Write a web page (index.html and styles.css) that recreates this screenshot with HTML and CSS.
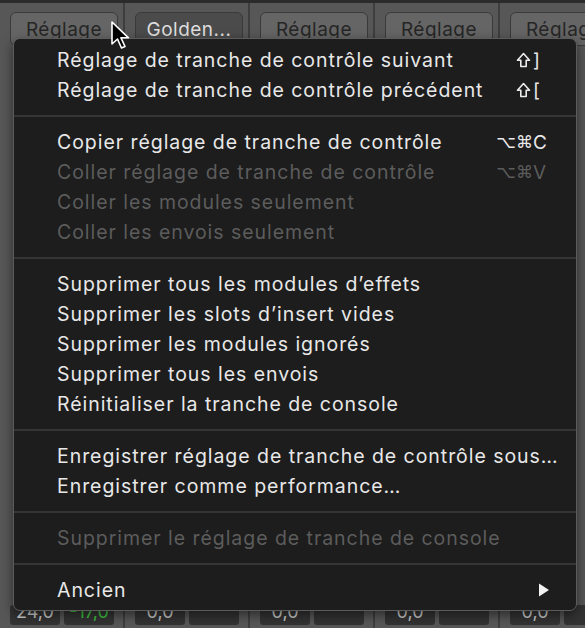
FILE: index.html
```html
<!DOCTYPE html>
<html lang="fr">
<head>
<meta charset="utf-8">
<link rel="stylesheet" href="styles.css">
</head>
<body>
<div class="mixer">
  <div class="strip">
    <div class="btn">Réglage</div>
    <div class="fields"><div class="field">24,0</div><div class="field green">-17,0</div></div>
  </div>
  <div class="strip">
    <div class="btn dark">Golden...</div>
    <div class="fields"><div class="field">0,0</div><div class="field"></div></div>
  </div>
  <div class="strip">
    <div class="btn">Réglage</div>
    <div class="fields"><div class="field">0,0</div><div class="field"></div></div>
  </div>
  <div class="strip">
    <div class="btn">Réglage</div>
    <div class="fields"><div class="field">0,0</div><div class="field"></div></div>
  </div>
  <div class="strip">
    <div class="btn">Réglage</div>
    <div class="fields"><div class="field">0,0</div><div class="field"></div></div>
  </div>
</div>

<div class="menu">
  <div class="item"><span class="label">Réglage de tranche de contrôle suivant</span><span class="sc"><svg class="shift" width="15" height="16" viewBox="0 0 15 16"><path d="M7.5 1.5 L13.5 8.2 L10.2 8.2 L10.2 14.5 L4.8 14.5 L4.8 8.2 L1.5 8.2 Z" fill="none" stroke="#ececec" stroke-width="1.6" stroke-linejoin="round"/></svg><span class="key">]</span></span></div>
  <div class="item"><span class="label">Réglage de tranche de contrôle précédent</span><span class="sc"><svg class="shift" width="15" height="16" viewBox="0 0 15 16"><path d="M7.5 1.5 L13.5 8.2 L10.2 8.2 L10.2 14.5 L4.8 14.5 L4.8 8.2 L1.5 8.2 Z" fill="none" stroke="#ececec" stroke-width="1.6" stroke-linejoin="round"/></svg><span class="key">[</span></span></div>
  <div class="sep"></div>
  <div class="item"><span class="label">Copier réglage de tranche de contrôle</span><span class="sc"><span class="mod">⌥⌘</span><span class="key">C</span></span></div>
  <div class="item off"><span class="label">Coller réglage de tranche de contrôle</span><span class="sc"><span class="mod">⌥⌘</span><span class="key">V</span></span></div>
  <div class="item off"><span class="label">Coller les modules seulement</span></div>
  <div class="item off"><span class="label">Coller les envois seulement</span></div>
  <div class="sep"></div>
  <div class="item"><span class="label">Supprimer tous les modules d’effets</span></div>
  <div class="item"><span class="label">Supprimer les slots d’insert vides</span></div>
  <div class="item"><span class="label">Supprimer les modules ignorés</span></div>
  <div class="item"><span class="label">Supprimer tous les envois</span></div>
  <div class="item"><span class="label">Réinitialiser la tranche de console</span></div>
  <div class="sep"></div>
  <div class="item"><span class="label">Enregistrer réglage de tranche de contrôle sous…</span></div>
  <div class="item"><span class="label">Enregistrer comme performance…</span></div>
  <div class="sep"></div>
  <div class="item off"><span class="label">Supprimer le réglage de tranche de console</span></div>
  <div class="sep"></div>
  <div class="item"><span class="label">Ancien</span><svg class="sub" width="12" height="14" viewBox="0 0 12 14"><path d="M1 0.5 L11 7 L1 13.5 Z" fill="#f2f2f2"/></svg></div>
</div>

<svg class="cursor" width="26" height="30" viewBox="0 0 26 30">
  <path d="M2 1 L2 23 L7.5 18 L11.5 27 L15 25.5 L11 16.8 L18.5 16.8 Z" fill="#000" stroke="#fff" stroke-width="1.6" stroke-linejoin="round"/>
</svg>
</body>
</html>
```

FILE: styles.css
```css
html, body {
  margin: 0;
  padding: 0;
}
body {
  width: 585px;
  height: 628px;
  overflow: hidden;
  position: relative;
  background: #4c4c4c;
  font-family: Inter, "Noto Sans", "DejaVu Sans", sans-serif;
}
.mixer {
  display: flex;
  height: 628px;
  border-top: 3px solid #2b2b2b;
  box-sizing: border-box;
}
.strip {
  flex: 0 0 125px;
  display: flex;
  flex-direction: column;
  justify-content: space-between;
  background: #575757;
  border-right: 2px solid #3e3e3e;
  box-sizing: border-box;
  padding: 9px 7px 0 10px;
  overflow: hidden;
}
.btn {
  height: 34px;
  box-sizing: border-box;
  border: 1px solid #3a3a3a;
  border-radius: 6px;
  background: #656565;
  color: #262626;
  font-size: 19px;
  letter-spacing: 0.5px;
  padding: 5px 0 0 0;
  text-align: center;
  width: 108px;
  flex: none;
  white-space: nowrap;
  overflow: hidden;
}
.btn.dark {
  background: #4b4b4b;
  color: #dedede;
}
.fields {
  display: flex;
  gap: 4px;
  height: 20px;
  margin-bottom: 3px;
}
.field {
  width: 50px;
  height: 20px;
  background: #333333;
  border-radius: 3px;
  color: #cfcfcf;
  font-size: 18px;
  text-align: center;
  line-height: 14px;
  overflow: hidden;
}
.field.green {
  color: #3fc43f;
}
.menu {
  position: absolute;
  left: 13px;
  top: 38px;
  width: 564px;
  height: 573px;
  box-sizing: border-box;
  background: #1d1d1d;
  border: 1px solid #5c5c5c;
  border-radius: 7px;
  padding: 6px 0 7px 0;
  box-shadow: 0 4px 12px rgba(0,0,0,0.5);
}
.item {
  height: 30px;
  display: flex;
  align-items: center;
  padding: 0 26px 0 43px;
  color: #e8e8e8;
  font-size: 19.5px;
  letter-spacing: 0.95px;
}
.item.off {
  color: #5c5c5c;
}
.label {
  flex: 1;
  white-space: nowrap;
}
.sc {
  display: flex;
  align-items: center;
  font-family: "DejaVu Sans", sans-serif;
  font-size: 17px;
  letter-spacing: 0;
}
.shift {
  margin-right: 2px;
}
.mod {
  text-align: right;
}
.key {
  width: 17px;
  font-family: Inter, "DejaVu Sans", sans-serif;
  font-size: 19px;
}
.sep {
  height: 22px;
  display: flex;
  align-items: center;
}
.sep::before {
  content: "";
  display: block;
  height: 2px;
  width: 100%;
  background: #353535;
}
.cursor {
  position: absolute;
  left: 110px;
  top: 21px;
}
```
